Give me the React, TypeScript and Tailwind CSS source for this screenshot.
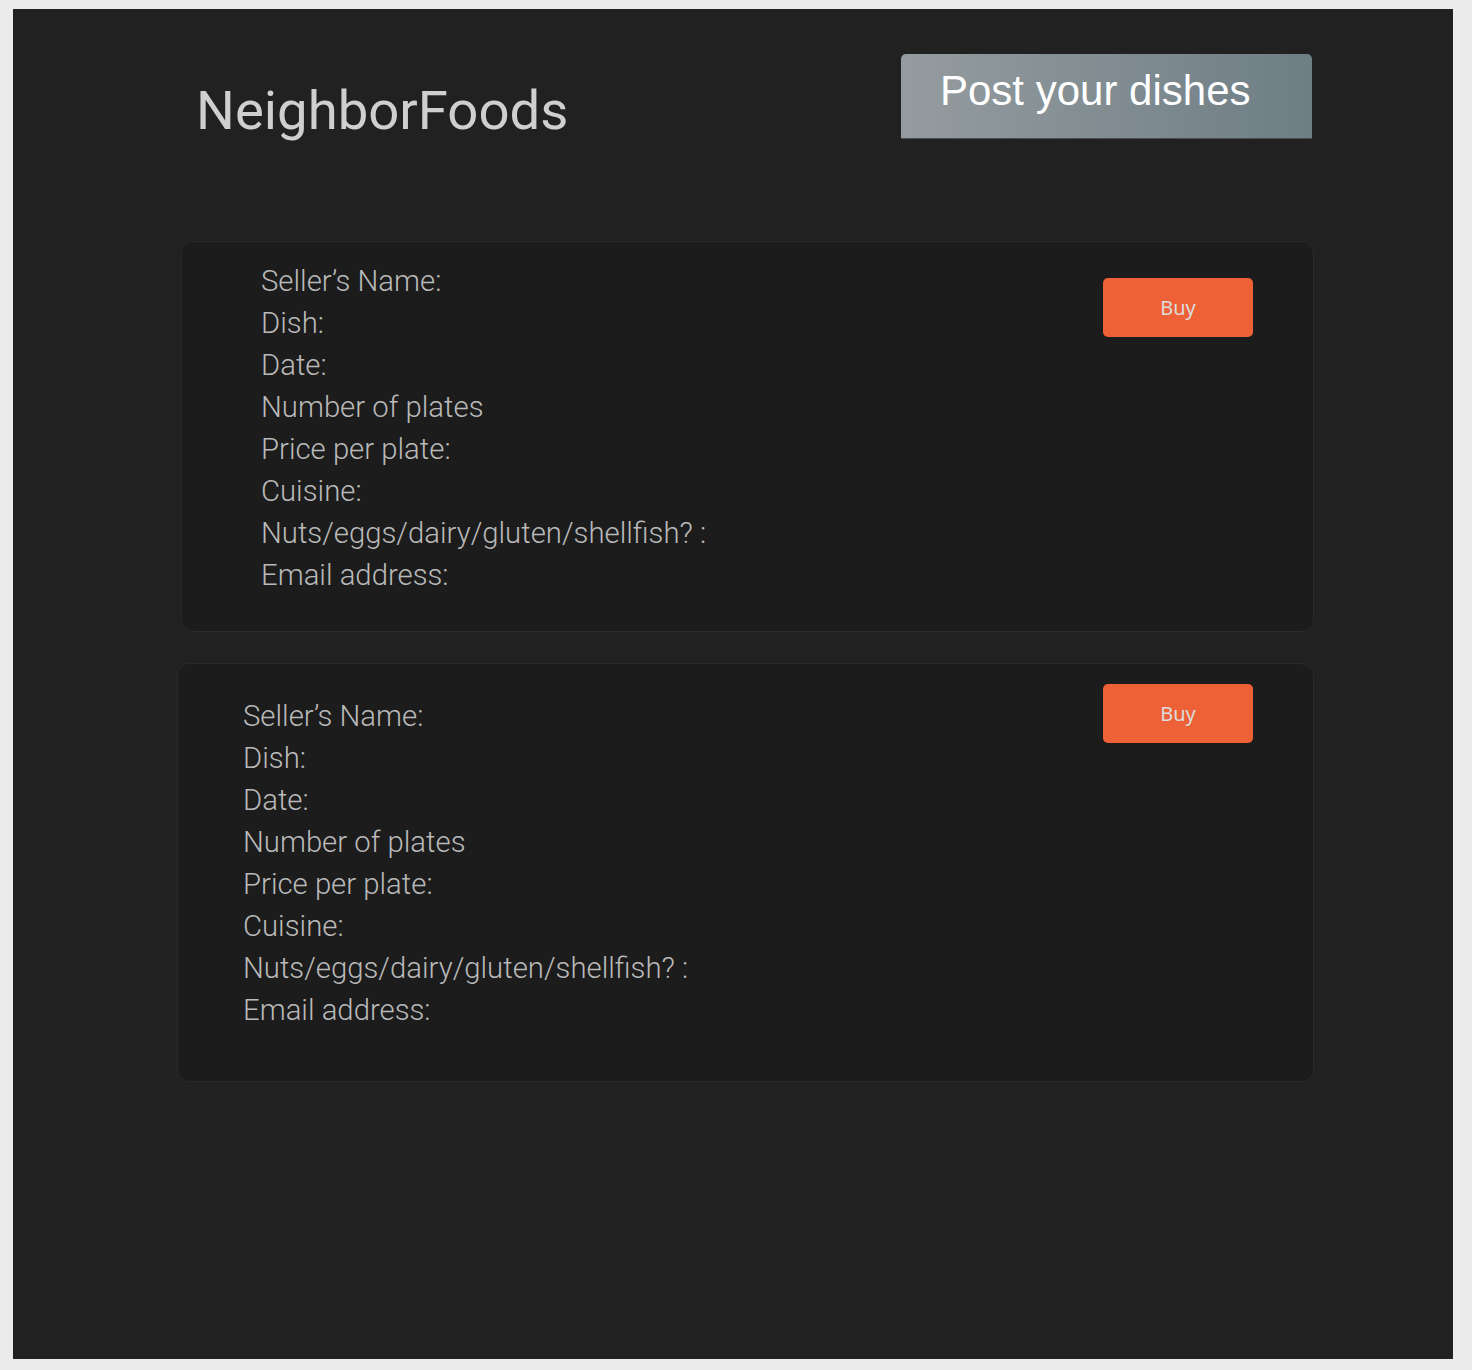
import React from 'react';

const fields = [
  'Seller’s Name:',
  'Dish:',
  'Date:',
  'Number of plates',
  'Price per plate:',
  'Cuisine:',
  'Nuts/eggs/dairy/gluten/shellfish? :',
  'Email address:',
];

const roboto = { fontFamily: 'Roboto, "Noto Sans", sans-serif' };
const robotoLight = { fontFamily: '"Roboto Light", Roboto, "Noto Sans", sans-serif' };

const ListingCard: React.FC<{ className: string; textPad: string; buyTop: string }> = ({
  className,
  textPad,
  buyTop,
}) => (
  <div
    className={`flex justify-between rounded-xl border border-[#2a2a2a] bg-[#1c1c1c] ${className}`}
  >
    <div className={`flex flex-col ${textPad}`}>
      {fields.map((f) => (
        <div
          key={f}
          className="text-[29.3px] font-light leading-[42px] text-[#b9b9b9]"
          style={robotoLight}
        >
          {f}
        </div>
      ))}
    </div>
    <div className={`pr-[60px] ${buyTop}`}>
      <button
        className="h-[59px] w-[150px] rounded-[5px] bg-[#ee6137] text-[20px] text-[#dcdcdc]"
        style={{ fontFamily: '"Noto Sans", "Open Sans", sans-serif' }}
      >
        Buy
      </button>
    </div>
  </div>
);

export default function App() {
  return (
    <div className="h-[1370px] w-[1472px] bg-[#ebebeb] pl-[13px] pt-[9px]">
      <div className="flex h-[1350px] w-[1440px] flex-col bg-[#212121]">
        <header className="flex items-start justify-between pl-[183px] pr-[141px]">
          <h1
            className="mt-[74px] text-[54.5px] leading-none text-[#cfcfcf]"
            style={roboto}
          >
            NeighborFoods
          </h1>
          <div
            className="mt-[45px] flex h-[85px] w-[411px] items-start rounded-t-[5px] border-b border-[#4a4f52] bg-gradient-to-r from-[#959c9f] to-[#6e7e85] pl-[39px] pt-[16px] text-[42px] leading-none text-white"
            style={{ fontFamily: '"Liberation Sans", Arial, sans-serif' }}
          >
            Post your dishes
          </div>
        </header>

        <div className="mt-[102px] flex flex-col gap-[31px] pr-[139px]">
          <ListingCard
            className="ml-[168px] h-[391px]"
            textPad="pl-[79px] pt-[18px]"
            buyTop="pt-[36px]"
          />
          <ListingCard
            className="ml-[164px] h-[419px]"
            textPad="pl-[65px] pt-[31px]"
            buyTop="pt-[20px]"
          />
        </div>
      </div>
    </div>
  );
}
